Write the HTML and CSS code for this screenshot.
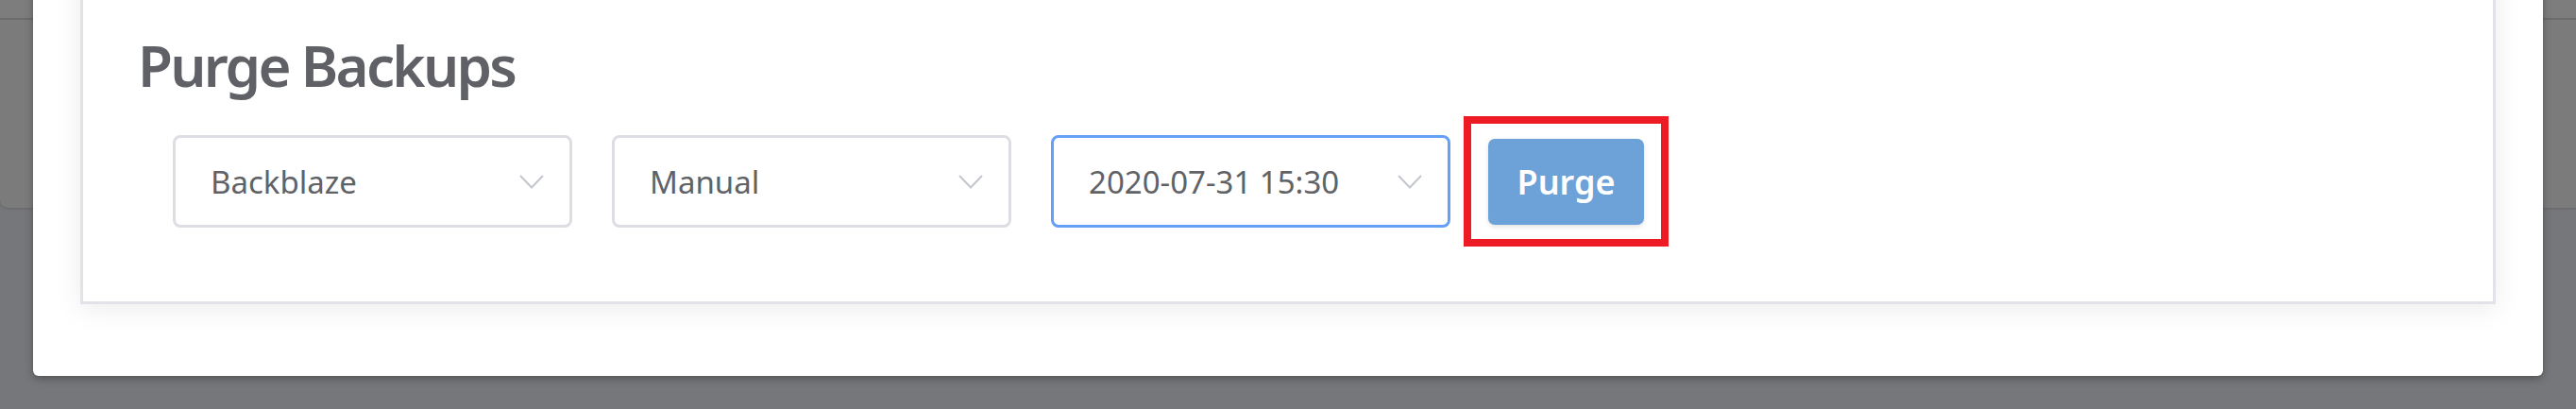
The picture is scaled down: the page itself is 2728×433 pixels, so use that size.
FILE: index.html
```html
<html>

<head>

    <meta name="viewport" content="width=device-width, initial-scale=1.0">

    <title>Purge Backups</title>

    <link rel="stylesheet" href="styles.css">

</head>

<body>

    <div class="page">
        <div class="page-header"></div>
        <div class="page-panel"></div>
    </div>

    <div class="modal">

        <div class="card">

            <h2 class="card-title">Purge Backups</h2>

            <div class="form-row">

                <div class="select">
                    <span class="select-value">Backblaze</span>
                    <svg class="chevron" viewBox="0 0 26 15"><path d="M1 1 L13 13.5 L25 1" /></svg>
                </div>

                <div class="select">
                    <span class="select-value">Manual</span>
                    <svg class="chevron" viewBox="0 0 26 15"><path d="M1 1 L13 13.5 L25 1" /></svg>
                </div>

                <div class="select select-focus">
                    <span class="select-value">2020-07-31 15:30</span>
                    <svg class="chevron" viewBox="0 0 26 15"><path d="M1 1 L13 13.5 L25 1" /></svg>
                </div>

                <div class="highlight">
                    <button class="purge-btn">Purge</button>
                </div>

            </div>

        </div>

    </div>

</body>

</html>
```

FILE: styles.css
```css
body {
    font-family: "Noto Sans", "Open Sans", sans-serif;
    background-color: #76777a;
    color: #606266;
    margin: 0;
    padding: 0;
    width: 2728px;
    height: 433px;
    overflow: hidden;
    position: relative;
}

.page-header {
    height: 19px;
    background-color: #7d7d7d;
    border-bottom: 2px solid #6d6d6d;
}

.page-panel {
    height: 199px;
    background-color: #7b7b7b;
    border-bottom-left-radius: 8px;
    box-shadow: 0 1px 3px rgba(0, 0, 0, 0.15);
}

.modal {
    position: absolute;
    left: 35px;
    top: -40px;
    width: 2658px;
    background-color: #ffffff;
    border-radius: 6px;
    box-shadow: 0 3px 8px rgba(0, 0, 0, 0.3);
    padding: 0 50px 76px 50px;
    box-sizing: border-box;
}

.card {
    background-color: #ffffff;
    border: 3px solid #e2e3e9;
    border-top: none;
    box-shadow: 0 5px 28px rgba(0, 0, 0, 0.08);
    padding: 0 0 78px 0;
}

.card-title {
    margin: 0;
    padding: 74px 0 0 58px;
    font-size: 60px;
    font-weight: 600;
    line-height: 70px;
    color: #606166;
    letter-spacing: -2.7px;
}

.form-row {
    display: flex;
    align-items: center;
    padding-left: 95px;
    margin-top: 39px;
}

.select {
    width: 423px;
    height: 98px;
    box-sizing: border-box;
    border: 3px solid #dcdee4;
    border-radius: 8px;
    display: flex;
    align-items: center;
    justify-content: space-between;
    padding: 0 27px 0 37px;
    margin-right: 42px;
    font-size: 33px;
    color: #606266;
}

.select-focus {
    border-color: #65a0f6;
    margin-right: 0;
}

.chevron {
    width: 26px;
    height: 15px;
    fill: none;
    stroke: #c3c6cd;
    stroke-width: 2;
}

.highlight {
    border: 8px solid #ed1c24;
    padding: 16px 18px 15px 18px;
    margin: -20px 0 -20px 14px;
    display: flex;
}

.purge-btn {
    width: 165px;
    height: 91px;
    background-color: #6ca2d8;
    color: #ffffff;
    border: none;
    border-radius: 7px;
    font-family: "Noto Sans", "Open Sans", sans-serif;
    font-size: 36px;
    font-weight: 600;
    box-shadow: 0 2px 5px rgba(0, 0, 0, 0.12);
    padding: 0;
}
```
